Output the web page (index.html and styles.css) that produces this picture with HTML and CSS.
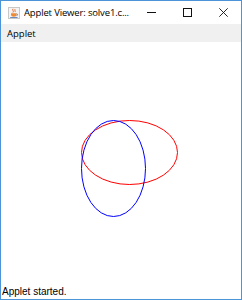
FILE: index.html
```html
<!DOCTYPE html>
<html>
<head>
<meta charset="utf-8">
<link rel="stylesheet" href="styles.css">
</head>
<body>
<div class="window">
  <div class="titlebar">
    <svg class="appicon" width="12" height="12" viewBox="0 0 12 12">
      <rect x="0.5" y="0.5" width="11" height="11" fill="#f4f4f4" stroke="#c8c8c8"/>
      <path d="M5 1.8 C3.8 3 6.2 4 5 5.5 M7 2.2 C6.2 3.4 7.8 3.8 7 5" stroke="#e05a1a" stroke-width="0.9" fill="none"/>
      <path d="M3 6.3 H8.6 V7.6 C8.6 9.4 7.4 9.8 5.8 9.8 C4.2 9.8 3 9.4 3 7.6 Z" fill="#f08a30"/>
      <path d="M8.6 6.8 C9.9 6.8 9.9 8.6 8.6 8.6" stroke="#5a7fb5" stroke-width="0.9" fill="none"/>
      <path d="M2.2 10.5 H9.6" stroke="#5a7fb5" stroke-width="0.9"/>
    </svg>
    <span class="title">Applet Viewer: solve1.c...</span>
    <div class="controls">
      <span class="ctl"><svg width="9" height="9" viewBox="0 0 9 9"><path d="M0 4.5 H9" stroke="#111" stroke-width="1"/></svg></span>
      <span class="ctl"><svg width="9" height="9" viewBox="0 0 9 9"><rect x="0.5" y="0.5" width="8" height="8" fill="none" stroke="#111"/></svg></span>
      <span class="ctl"><svg width="9" height="9" viewBox="0 0 9 9"><path d="M0.3 0.3 L8.7 8.7 M8.7 0.3 L0.3 8.7" stroke="#111" stroke-width="0.9"/></svg></span>
    </div>
  </div>
  <div class="menubar"><span class="menu">Applet</span></div>
  <div class="canvas">
    <svg class="drawing" width="240" height="240" viewBox="0 0 240 240">
      <ellipse cx="128.5" cy="110.5" rx="48" ry="32" fill="none" stroke="#ff0000" stroke-width="1"/>
      <ellipse cx="112.5" cy="126.5" rx="32" ry="48" fill="none" stroke="#0000ff" stroke-width="1"/>
    </svg>
  </div>
  <div class="status">Applet started.</div>
</div>
</body>
</html>
```

FILE: styles.css
```css
html, body {
  margin: 0;
  padding: 0;
  background: #ffffff;
}
.window {
  width: 242px;
  height: 300px;
  box-sizing: border-box;
  border: 1px solid #4c94d8;
  display: flex;
  flex-direction: column;
  background: #ffffff;
  overflow: hidden;
}
.titlebar {
  height: 23px;
  display: flex;
  align-items: center;
  background: #ffffff;
  font-family: "Open Sans", "Liberation Sans", sans-serif;
  font-size: 9.5px;
  color: #000;
}
.appicon {
  margin-left: 7px;
  margin-right: 4px;
  flex: none;
}
.title {
  white-space: nowrap;
  letter-spacing: -0.15px;
  flex: 1;
  min-width: 0;
  overflow: hidden;
}
.controls {
  margin-left: auto;
  display: flex;
  height: 100%;
  flex: none;
}
.ctl {
  width: 36px;
  display: flex;
  align-items: center;
  justify-content: center;
}
.menubar {
  height: 18px;
  background: #f0f0f0;
  display: flex;
  align-items: center;
  font-family: "Open Sans", "Liberation Sans", sans-serif;
  font-size: 9.5px;
  color: #000;
}
.menu {
  margin-left: 6px;
}
.canvas {
  flex: 1;
  background: #ffffff;
}
.drawing {
  display: block;
}
.status {
  height: 15px;
  padding-left: 1px;
  font-family: "Liberation Sans", Arial, sans-serif;
  font-size: 10px;
  line-height: 15px;
  color: #000;
}
```
